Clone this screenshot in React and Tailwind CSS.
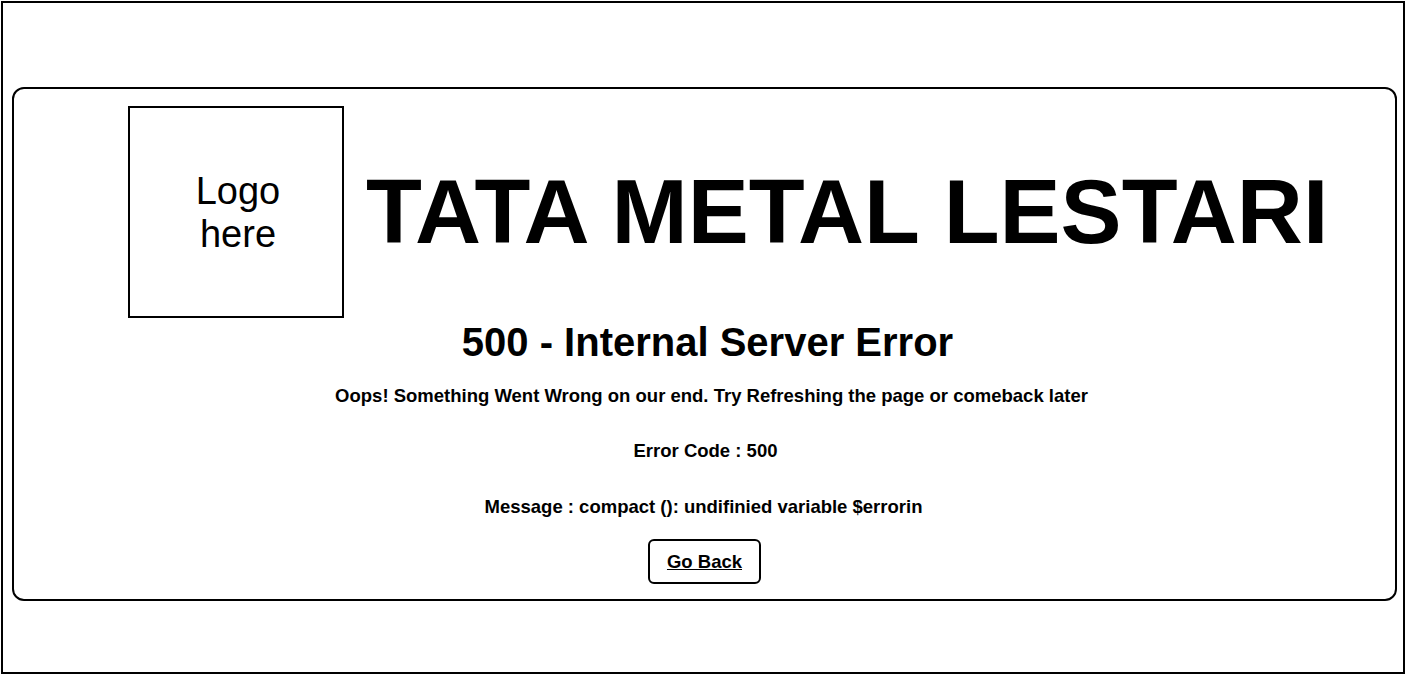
export default function App() {
  return (
    <div className="w-[1406px] h-[675px] bg-white pt-px pl-px" style={{ fontFamily: '"Liberation Sans", Arial, sans-serif' }}>
      <div className="w-[1404px] h-[673px] border-2 border-black flex flex-col">
        <div className="ml-[9px] mt-[84px] w-[1385px] h-[514px] border-2 border-black rounded-[12px] flex flex-col text-black">
          <div className="flex items-center pl-[114px] pt-[17px]">
            <div className="w-[216px] h-[212px] border-2 border-black flex items-center justify-center text-center text-[38px] leading-[43px]">
              <span className="pt-[2px] pl-[4px]">Logo<br />here</span>
            </div>
            <h1 className="ml-[22px] text-[91.5px] leading-none font-bold whitespace-nowrap">TATA METAL LESTARI</h1>
          </div>
          <div className="flex flex-col items-center">
            <h2 className="mt-[4px] ml-[6px] text-[40px] leading-[40px] font-bold">500 - Internal Server Error</h2>
            <p className="mt-[22px] ml-[14px] text-[18.5px] leading-[24px] font-bold">Oops! Something Went Wrong on our end. Try Refreshing the page or comeback later</p>
            <p className="mt-[31px] ml-[2px] text-[18.5px] leading-[24px] font-bold">Error Code : 500</p>
            <p className="mt-[32px] ml-[-2px] text-[18.5px] leading-[24px] font-bold">Message : compact (): undifinied variable $errorin</p>
            <button className="mt-[20px] w-[113px] h-[45px] border-2 border-black rounded-[6px] text-[18.5px] font-bold underline bg-white">Go Back</button>
          </div>
        </div>
      </div>
    </div>
  );
}
